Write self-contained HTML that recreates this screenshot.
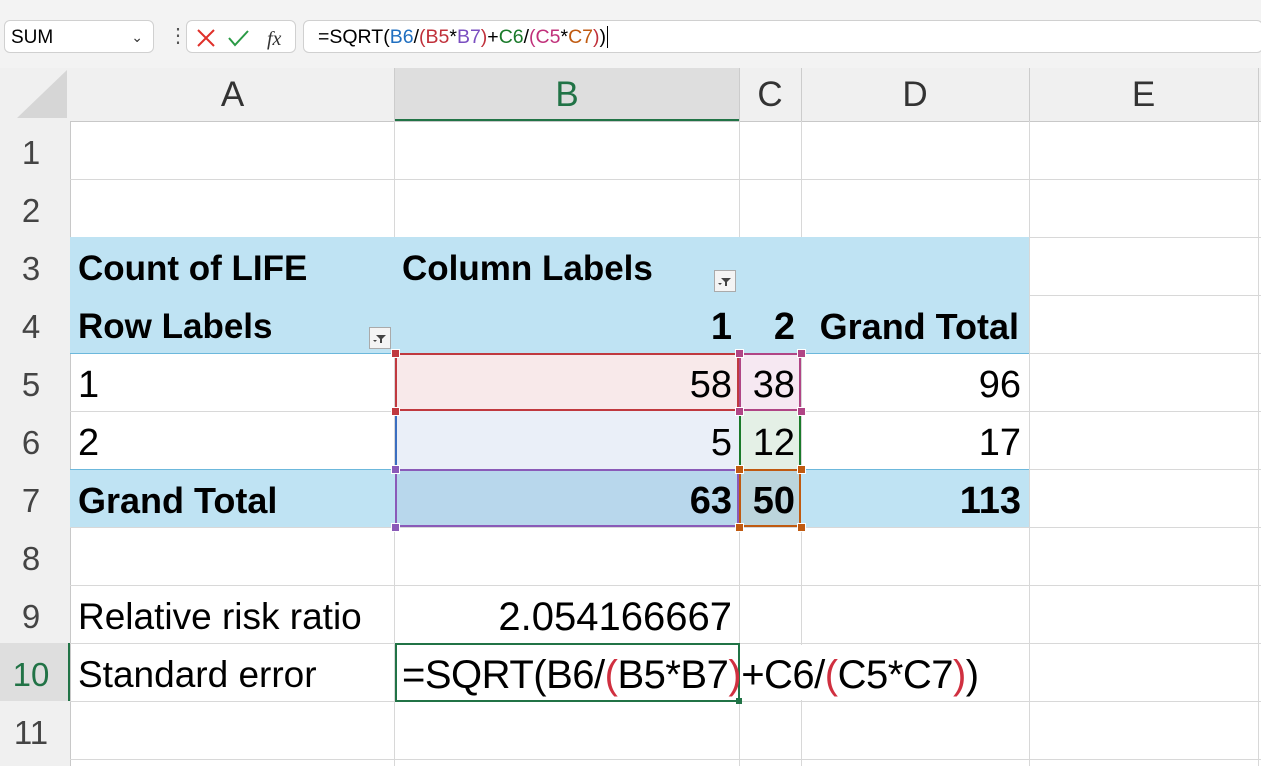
<!DOCTYPE html>
<html><head><style>
body{margin:0;width:1261px;height:766px;overflow:hidden;background:#fff;font-family:"Liberation Sans",Arial,sans-serif;position:relative}
.a{position:absolute;white-space:nowrap}
.t{font-size:38px;color:#000;line-height:58px;height:58px}
.b{font-weight:bold}
.r{text-align:right}
.rh{font-size:33px;color:#444;width:62px;text-align:center;line-height:58px}
.hl{position:absolute;height:1px;background:#d8d8d8}
.vl{position:absolute;width:1px;background:#d8d8d8}
.hd{position:absolute;font-size:35px;color:#333;text-align:center;line-height:53px;top:68px;height:53px}
.h{position:absolute;width:7px;height:7px;border:1px solid #fff}
.fb{position:absolute;width:22px;height:22px;border:1px solid #aaa;background:#f4f4f4;box-sizing:border-box}
</style></head><body>
<div class="a" style="left:0;top:0;width:1261px;height:10px;background:#f3f3f3;border-bottom:1px solid #ddd"></div>
<div class="a" style="left:0;top:10px;width:1261px;height:58px;background:#f3f3f3"></div>
<div class="a" style="left:4px;top:20px;width:150px;height:33px;border:1px solid #d0d0d0;border-radius:6px;background:#fff;font-size:19px;line-height:33px;padding-left:6px;box-sizing:border-box">SUM<span style="position:absolute;right:10px;top:0;font-size:14px;color:#333">&#8964;</span></div>
<div class="a" style="left:168px;top:26px;font-size:20px;line-height:20px;color:#555">&#8942;</div>
<div class="a" style="left:186px;top:20px;width:110px;height:33px;border:1px solid #d0d0d0;border-radius:6px;background:#fff;box-sizing:border-box">
<svg width="110" height="33" style="position:absolute;left:0;top:0"><path d="M11 9L27 25M27 9L11 25" stroke="#e0302a" stroke-width="2" fill="none"/><path d="M42 17L48 24L61 10" stroke="#2a9a45" stroke-width="2" fill="none"/><text x="80" y="24" font-family="Liberation Serif" font-style="italic" font-size="20" fill="#333">fx</text></svg></div>
<div class="a" style="left:303px;top:20px;width:960px;height:33px;border:1px solid #d0d0d0;border-radius:6px;background:#fff;box-sizing:border-box;font-size:19.5px;line-height:33px;padding-left:14px">=SQRT(<span style="color:#1f6fc0">B6</span>/<span style="color:#c0303a">(B5</span>*<span style="color:#7a4ec0">B7</span><span style="color:#c0303a">)</span>+<span style="color:#1a7a2a">C6</span>/<span style="color:#c0307a">(C5</span>*<span style="color:#c05a10">C7</span><span style="color:#c0303a">)</span>)<span style="border-left:1px solid #000;margin-left:1px"></span></div>
<div class="a" style="left:0;top:68px;width:1261px;height:53px;background:#f0f0f0;border-bottom:1px solid #c8c8c8"></div>
<div class="a" style="left:0;top:121px;width:70px;height:645px;background:#f0f0f0;border-right:1px solid #c8c8c8"></div>
<svg class="a" style="left:15px;top:68px" width="55" height="53"><path d="M2 50L52 50L52 2Z" fill="#d6d6d6"/></svg>
<div class="a" style="left:395px;top:68px;width:344px;height:53px;background:#dedede;border-bottom:2px solid #217346;box-sizing:border-box"></div>
<div class="hd" style="left:70px;width:325px">A</div>
<div class="hd" style="left:395px;width:344px;color:#217346">B</div>
<div class="hd" style="left:739px;width:62px">C</div>
<div class="hd" style="left:801px;width:228px">D</div>
<div class="hd" style="left:1029px;width:229px">E</div>
<div class="vl" style="left:394px;top:68px;height:53px;background:#ccc"></div>
<div class="vl" style="left:739px;top:68px;height:53px;background:#ccc"></div>
<div class="vl" style="left:801px;top:68px;height:53px;background:#ccc"></div>
<div class="vl" style="left:1029px;top:68px;height:53px;background:#ccc"></div>
<div class="vl" style="left:1258px;top:68px;height:53px;background:#ccc"></div>
<div class="vl" style="left:394px;top:121px;height:645px"></div>
<div class="vl" style="left:739px;top:121px;height:645px"></div>
<div class="vl" style="left:801px;top:121px;height:645px"></div>
<div class="vl" style="left:1029px;top:121px;height:645px"></div>
<div class="vl" style="left:1258px;top:121px;height:645px"></div>
<div class="hl" style="left:70px;top:179px;width:1191px"></div>
<div class="hl" style="left:70px;top:237px;width:1191px"></div>
<div class="hl" style="left:70px;top:295px;width:1191px"></div>
<div class="hl" style="left:70px;top:353px;width:1191px"></div>
<div class="hl" style="left:70px;top:411px;width:1191px"></div>
<div class="hl" style="left:70px;top:469px;width:1191px"></div>
<div class="hl" style="left:70px;top:527px;width:1191px"></div>
<div class="hl" style="left:70px;top:585px;width:1191px"></div>
<div class="hl" style="left:70px;top:643px;width:1191px"></div>
<div class="hl" style="left:70px;top:701px;width:1191px"></div>
<div class="hl" style="left:70px;top:759px;width:1191px"></div>
<div class="a rh" style="left:0;top:124px">1</div>
<div class="a rh" style="left:0;top:182px">2</div>
<div class="a rh" style="left:0;top:240px">3</div>
<div class="a rh" style="left:0;top:298px">4</div>
<div class="a rh" style="left:0;top:356px">5</div>
<div class="a rh" style="left:0;top:414px">6</div>
<div class="a rh" style="left:0;top:472px">7</div>
<div class="a rh" style="left:0;top:530px">8</div>
<div class="a rh" style="left:0;top:588px">9</div>
<div class="a" style="left:0;top:643px;width:70px;height:58px;background:#dedede;border-right:2px solid #217346;box-sizing:border-box"></div>
<div class="a rh" style="left:0;top:646px;color:#217346">10</div>
<div class="a rh" style="left:0;top:704px">11</div>
<div class="a" style="left:70px;top:237px;width:959px;height:116px;background:#bfe3f3"></div>
<div class="a" style="left:70px;top:469px;width:959px;height:58px;background:#bfe3f3"></div>
<div class="hl" style="left:70px;top:353px;width:959px;background:#6cb8dc"></div>
<div class="hl" style="left:70px;top:469px;width:959px;background:#6cb8dc"></div>
<div class="a" style="left:395px;top:353px;width:344px;height:58px;background:#f8e9ea;border:2px solid #c0393f;box-sizing:border-box"></div>
<div class="a" style="left:739px;top:353px;width:62px;height:58px;background:#f6e8f2;border:2px solid #b04585;box-sizing:border-box"></div>
<div class="a" style="left:395px;top:411px;width:344px;height:58px;background:#eaeff8;border-left:2px solid #3a6ec0;box-sizing:border-box"></div>
<div class="a" style="left:739px;top:411px;width:62px;height:58px;background:#e4f0e6;border-left:2px solid #1a7a2a;border-right:2px solid #1a7a2a;box-sizing:border-box"></div>
<div class="a" style="left:395px;top:469px;width:344px;height:58px;background:#b8d7ec;border:2px solid #8a5ab8;box-sizing:border-box"></div>
<div class="a" style="left:739px;top:469px;width:62px;height:58px;background:#bcd5dc;border:2px solid #c05a10;box-sizing:border-box"></div>
<div class="h" style="left:391px;top:349px;background:#c0393f"></div>
<div class="h" style="left:735px;top:349px;background:#b04585"></div>
<div class="h" style="left:797px;top:349px;background:#b04585"></div>
<div class="h" style="left:391px;top:407px;background:#c0393f"></div>
<div class="h" style="left:735px;top:407px;background:#b04585"></div>
<div class="h" style="left:797px;top:407px;background:#b04585"></div>
<div class="h" style="left:391px;top:465px;background:#8a5ab8"></div>
<div class="h" style="left:735px;top:465px;background:#c05a10"></div>
<div class="h" style="left:797px;top:465px;background:#c05a10"></div>
<div class="h" style="left:391px;top:523px;background:#8a5ab8"></div>
<div class="h" style="left:735px;top:523px;background:#c05a10"></div>
<div class="h" style="left:797px;top:523px;background:#c05a10"></div>
<div class="fb" style="left:714px;top:270px"><svg width="20" height="20"><path d="M6 7H16L12 11V15H10V11Z" fill="#444"/><path d="M3 12H7L5 14Z" fill="#444"/></svg></div>
<div class="fb" style="left:369px;top:327px"><svg width="20" height="20"><path d="M6 7H16L12 11V15H10V11Z" fill="#444"/><path d="M3 12H7L5 14Z" fill="#444"/></svg></div>
<div class="a t b" style="left:78px;top:240px;font-size:35px">Count of LIFE</div>
<div class="a t b" style="left:402px;top:240px;font-size:35px">Column Labels</div>
<div class="a t b" style="left:78px;top:298px;font-size:35px">Row Labels</div>
<div class="a t b r" style="left:395px;top:298px;width:337px">1</div>
<div class="a t b r" style="left:739px;top:298px;width:56px">2</div>
<div class="a t b r" style="left:790px;top:298px;width:229px;font-size:36px">Grand Total</div>
<div class="a t" style="left:78px;top:356px">1</div>
<div class="a t r" style="left:395px;top:356px;width:337px">58</div>
<div class="a t r" style="left:739px;top:356px;width:56px">38</div>
<div class="a t r" style="left:801px;top:356px;width:220px">96</div>
<div class="a t" style="left:78px;top:414px">2</div>
<div class="a t r" style="left:395px;top:414px;width:337px">5</div>
<div class="a t r" style="left:739px;top:414px;width:56px">12</div>
<div class="a t r" style="left:801px;top:414px;width:220px">17</div>
<div class="a t b" style="left:78px;top:472px;font-size:36px">Grand Total</div>
<div class="a t b r" style="left:395px;top:472px;width:337px">63</div>
<div class="a t b r" style="left:739px;top:472px;width:56px">50</div>
<div class="a t b r" style="left:801px;top:472px;width:220px">113</div>
<div class="a t" style="left:78px;top:588px;font-size:37px">Relative risk ratio</div>
<div class="a t r" style="left:395px;top:588px;width:337px;font-size:40px">2.054166667</div>
<div class="a t" style="left:78px;top:646px;font-size:37px">Standard error</div>
<div class="a" style="left:740px;top:645px;width:250px;height:55px;background:#fff"></div>
<div class="a" style="left:395px;top:643px;width:345px;height:59px;border:2px solid #217346;box-sizing:border-box;background:#fff"></div>
<div class="a" style="left:736px;top:698px;width:6px;height:6px;background:#217346"></div>
<div class="a t" style="left:402px;top:646px;font-size:40px;letter-spacing:-0.5px">=SQRT(B6/<span style="color:#d03040">(</span>B5*B7<span style="color:#d03040">)</span>+C6/<span style="color:#d03040">(</span>C5*C7<span style="color:#d03040">)</span>)</div>
</body></html>
